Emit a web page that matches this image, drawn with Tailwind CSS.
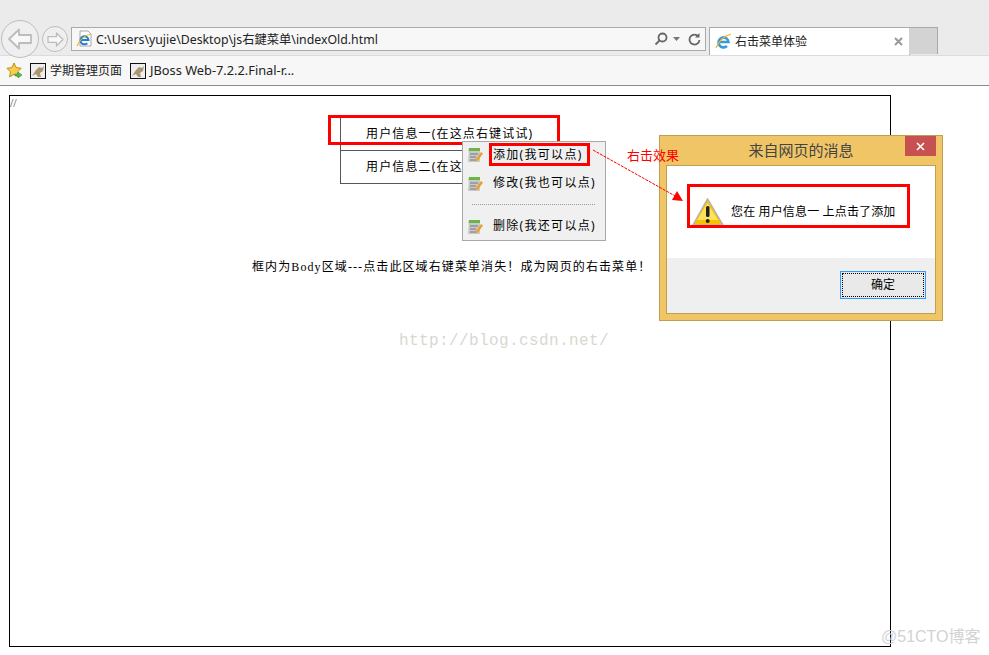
<!DOCTYPE html>
<html lang="zh">
<head>
    <meta charset="UTF-8">
    <title>右击菜单体验</title>
    <script src="https://cdn.jsdelivr.net/npm/@tailwindcss/browser@4"></script>
</head>
<body class="w-[989px] h-[655px] overflow-hidden bg-white font-['Noto_Sans','Noto_Sans_CJK_SC',sans-serif] text-[12px] text-black">

    <!-- browser chrome -->
    <div class="h-[55px] bg-[#ebebeb] relative">
        <div class="absolute left-[1px] top-[20px] w-[38px] h-[38px] rounded-full border border-[#bdbdbd] bg-[#efefef] flex items-center justify-center">
            <svg width="26" height="24" viewBox="0 0 26 24" fill="#f8f8f8" stroke="#bcbcbc" stroke-width="1.8" stroke-linejoin="round"><path d="M2 12 12 2.500v5.500h12v8H12v5.500z"/></svg>
        </div>
        <div class="absolute left-[42px] top-[26px] w-[26px] h-[26px] rounded-full border border-[#bdbdbd] bg-[#efefef] flex items-center justify-center">
            <svg width="17" height="15" viewBox="0 0 17 15" fill="#f8f8f8" stroke="#bcbcbc" stroke-width="1.3" stroke-linejoin="round"><path d="M16 7.500 9.500 1v3.700H1v5.600h8.500V14z"/></svg>
        </div>
        <div class="absolute left-[71px] top-[27px] w-[635px] h-[24px] border border-[#a9a9a9] bg-[#f7f7f7] flex items-center">
            <svg class="ml-[4px]" width="17" height="18" viewBox="0 0 17 18"><path d="M4 1h8l3 3v12H4z" fill="#fff" stroke="#a8a8a8"/><path d="M4.500 10h8a4 4 0 1 0-1.200 3.200" fill="none" stroke="#1f7fd0" stroke-width="2"/><path d="M1 16C4 9 9 5 15 4" fill="none" stroke="#f0b429" stroke-width="1.200"/></svg>
            <span class="ml-[3px] pt-[2px] text-[#222] whitespace-nowrap text-[12.3px]">C:\Users\yujie\Desktop\js右鍵菜单\indexOld.html</span>
            <div class="ml-auto mr-[4px] flex items-center gap-[5px]">
                <svg width="14" height="14" viewBox="0 0 14 14" fill="none" stroke="#666" stroke-width="1.8"><circle cx="8.500" cy="5.500" r="4"/><path d="M5.500 8.500 1.500 12.500"/></svg>
                <svg width="7" height="4" viewBox="0 0 7 4" fill="#777"><path d="M0 0h7L3.500 4z"/></svg>
                <svg class="ml-[3px]" width="13" height="14" viewBox="0 0 13 14" fill="none" stroke="#666" stroke-width="1.8"><path d="M10.500 4.500A5 5 0 1 0 11.500 8"/><path d="M11.500 1v4.500H7" fill="#666" stroke="none"/></svg>
            </div>
        </div>
        <div class="absolute left-[709px] top-[27px] w-[201px] h-[28px] border border-b-0 border-[#a9a9a9] bg-white flex items-center">
            <svg class="ml-[5px]" width="17" height="17" viewBox="0 0 17 17"><path d="M3.500 9h10a5 5 0 1 0-1.500 4" fill="none" stroke="#3a9ad9" stroke-width="2.600"/><path d="M1 15C4 8 9 3 16 1" fill="none" stroke="#f0b429" stroke-width="1.200"/></svg>
            <span class="ml-[3px] text-[#222]">右击菜单体验</span>
            <svg class="ml-auto mr-[6px]" width="9" height="9" viewBox="0 0 9 9" stroke="#9a9a9a" stroke-width="2"><path d="M1 1l7 7M8 1 1 8"/></svg>
        </div>
        <div class="absolute left-[909px] top-[27px] w-[29px] h-[27px] border border-l-0 border-b-0 border-[#a9a9a9] bg-[#d3d3d3]"></div>
    </div>
    <div class="h-[31px] bg-[#f7f7f7] border-t border-[#dcdcdc] border-b border-b-[#8a8a8a] flex items-center pl-[6px]">
        <svg width="17" height="17" viewBox="0 0 17 17"><path d="M8 1l2.200 4.600 5 .7-3.600 3.500.8 5-4.400-2.400-4.400 2.400.8-5L1 6.300l5-.7z" fill="#f6cf4f" stroke="#c08a1a"/><path d="M9 12h3v-2l4 3-4 3v-2H9z" fill="#55b84a" stroke="#2f8a2a" stroke-width=".5"/></svg>
        <svg class="ml-[7px]" width="16" height="16" viewBox="0 0 16 16"><rect x=".5" y=".5" width="15" height="15" fill="#eee" stroke="#111"/><path d="M2 13 6 7l3-3 3 1 2-2-1 5-3 2 1 4H8L6 11z" fill="#a9976f"/></svg>
        <span class="ml-[4px] text-[#222]">学期管理页面</span>
        <svg class="ml-[8px]" width="16" height="16" viewBox="0 0 16 16"><rect x=".5" y=".5" width="15" height="15" fill="#eee" stroke="#111"/><path d="M2 13 6 7l3-3 3 1 2-2-1 5-3 2 1 4H8L6 11z" fill="#a9976f"/></svg>
        <span class="ml-[4px] text-[#222] text-[12.8px]">JBoss Web-7.2.2.Final-r...</span>
    </div>

    <!-- page -->
    <div class="relative h-[569px]">
        <div class="absolute left-[9px] top-[9px] w-[882px] h-[552px] border border-black">
            <span class="absolute left-[0px] top-[-2px] text-[12px] text-[#444] font-['Liberation_Serif',serif]">//</span>
        </div>

        <!-- table -->
        <div class="absolute left-[340px] top-[32px] w-[218px] h-[66px] border-l border-b border-[#555] tracking-[1.15px]">
            <div class="h-[33px] border-b border-[#555] flex items-center pl-[25px] whitespace-nowrap">用户信息一(在这点右键试试)</div>
            <div class="h-[32px] flex items-center pl-[25px] whitespace-nowrap">用户信息二(在这点右键试试)</div>
        </div>
        <div class="absolute left-[328px] top-[29px] w-[232px] h-[30px] border-[3px] border-[#f00]"></div>

        <p class="absolute left-[252px] top-[172px] whitespace-nowrap tracking-[1.1px] font-['Liberation_Serif','Noto_Sans_CJK_SC',serif]">框内为Body区域---点击此区域右键菜单消失！成为网页的右击菜单！</p>
        <p class="absolute left-[399px] top-[243px] text-[#d8d8d2] text-[16px] tracking-[0.4px] font-['Liberation_Mono',monospace] whitespace-nowrap">http://blog.csdn.net/</p>

        <!-- context menu -->
        <div class="absolute left-[462px] top-[55px] w-[144px] h-[100px] border border-[#a8a8a8] bg-[#f0f0f0] flex flex-col pl-[4px] tracking-[1.3px]">
            <div class="h-[28px] flex items-center gap-[9px] pb-[2px]">
                <svg width="17" height="17" viewBox="0 0 17 17"><path d="M2 2h11v14H1z" fill="#c9c9c9"/><path d="M2 2h11v3H1.500z" fill="#6cb34a"/><path d="M3 8h8M3 11h6M3 14h7" stroke="#777"/><path d="M9 13l5-7 2 1.500-5 7-2.500 1z" fill="#e9a02e"/></svg>
                <span>添加(我可以点)</span>
            </div>
            <div class="h-[28px] flex items-center gap-[9px]">
                <svg width="17" height="17" viewBox="0 0 17 17"><path d="M2 2h11v14H1z" fill="#c9c9c9"/><path d="M2 2h11v3H1.500z" fill="#6cb34a"/><path d="M3 8h8M3 11h6M3 14h7" stroke="#777"/><path d="M9 13l5-7 2 1.500-5 7-2.500 1z" fill="#e9a02e"/></svg>
                <span>修改(我也可以点)</span>
            </div>
            <div class="h-[16px] flex items-center pl-[5px] pr-[10px]"><div class="w-full border-t border-dotted border-[#999]"></div></div>
            <div class="h-[28px] flex items-center gap-[9px]">
                <svg width="17" height="17" viewBox="0 0 17 17"><path d="M2 2h11v14H1z" fill="#c9c9c9"/><path d="M2 2h11v3H1.500z" fill="#6cb34a"/><path d="M3 8h8M3 11h6M3 14h7" stroke="#777"/><path d="M9 13l5-7 2 1.500-5 7-2.500 1z" fill="#e9a02e"/></svg>
                <span>删除(我还可以点)</span>
            </div>
        </div>
        <div class="absolute left-[489px] top-[57px] w-[101px] h-[23px] border-[3px] border-[#f00]"></div>

        <!-- alert dialog -->
        <div class="absolute left-[659px] top-[49px] w-[284px] h-[186px] border border-[#c0a050] bg-[#efc566] flex flex-col px-[6px] pb-[6px]">
            <div class="h-[29px] shrink-0 flex items-center justify-center text-[15px] text-[#444]">来自网页的消息</div>
            <div class="absolute right-[6px] top-[0px] w-[31px] h-[20px] bg-[#c75050] flex items-center justify-center">
                <svg width="9" height="9" viewBox="0 0 9 9" stroke="#fff" stroke-width="1.6"><path d="M1 1l7 7M8 1 1 8"/></svg>
            </div>
            <div class="flex-1 border border-[#c0a050] bg-white flex flex-col">
                <div class="h-[92px] shrink-0 relative">
                    <svg class="absolute left-[25px] top-[32px]" width="32" height="28" viewBox="0 0 32 28"><path d="M15.500 1 31 27H1z" fill="#f5c400" stroke="#b5b5b5" stroke-width="1.500"/><path d="M15.500 5 5 22h21z" fill="#ffe35a"/><rect x="14" y="8" width="3.500" height="11" rx="1.500" fill="#222"/><circle cx="15.700" cy="23" r="2" fill="#222"/></svg>
                    <span class="absolute left-[64px] top-[37px] whitespace-nowrap tracking-[0.15px]">您在 用户信息一 上点击了添加</span>
                </div>
                <div class="flex-1 bg-[#efefef] flex items-start justify-end pt-[13px] pr-[9px]">
                    <button class="w-[86px] h-[28px] border border-[#3399ff] bg-[#e9e9e9] p-[1px]">
                        <span class="w-full h-full flex items-center justify-center border border-dotted border-black">确定</span>
                    </button>
                </div>
            </div>
        </div>
        <div class="absolute left-[687px] top-[98px] w-[223px] h-[44px] border-[3px] border-[#f00]"></div>

        <!-- annotation lies over the dialog -->
        <svg class="absolute left-[585px] top-[55px]" width="110" height="70" viewBox="0 0 110 70">
            <path d="M8 9 92 56" stroke="#f00" stroke-dasharray="3 1" fill="none"/>
            <path d="M98 60 87 59 92 50z" fill="#f00"/>
        </svg>
        <span class="absolute left-[627px] top-[60px] text-[13px] text-[#f00]">右击效果</span>

        <span class="absolute left-[881px] top-[539px] text-[16px] text-[#d2d2d2] font-['Liberation_Sans','Noto_Sans_CJK_SC',sans-serif]">@51CTO博客</span>
    </div>
</body>
</html>
